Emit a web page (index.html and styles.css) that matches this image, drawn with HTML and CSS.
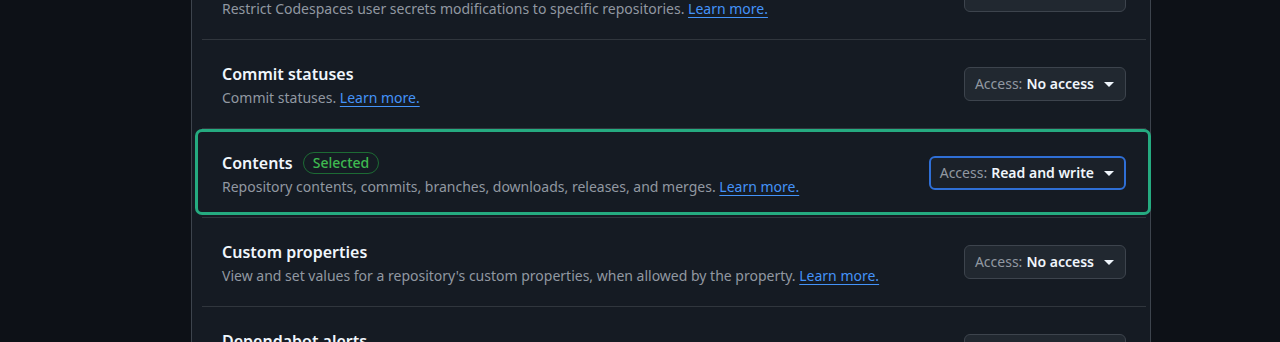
FILE: index.html
```html
<!DOCTYPE html>
<html lang="en">
<head>
<meta charset="utf-8">
<title>Permissions</title>
<link rel="stylesheet" href="styles.css">
</head>
<body>
<div class="page">
  <div class="panel">
    <ul class="perm-list">
      <li class="perm">
        <div class="perm-info">
          <div class="perm-title">Codespaces user secrets</div>
          <div class="perm-desc">Restrict Codespaces user secrets modifications to specific repositories. <a href="#">Learn more.</a></div>
        </div>
        <button class="access"><span class="lbl">Access:</span><span class="val">No access</span><span class="caret"></span></button>
      </li>
      <li class="perm">
        <div class="perm-info">
          <div class="perm-title">Commit statuses</div>
          <div class="perm-desc">Commit statuses. <a href="#">Learn more.</a></div>
        </div>
        <button class="access"><span class="lbl">Access:</span><span class="val">No access</span><span class="caret"></span></button>
      </li>
      <li class="perm selected">
        <div class="perm-info">
          <div class="perm-title">Contents <span class="badge">Selected</span></div>
          <div class="perm-desc">Repository contents, commits, branches, downloads, releases, and merges. <a href="#">Learn more.</a></div>
        </div>
        <button class="access focus"><span class="lbl">Access:</span><span class="val">Read and write</span><span class="caret"></span></button>
      </li>
      <li class="perm">
        <div class="perm-info">
          <div class="perm-title">Custom properties</div>
          <div class="perm-desc">View and set values for a repository's custom properties, when allowed by the property. <a href="#">Learn more.</a></div>
        </div>
        <button class="access"><span class="lbl">Access:</span><span class="val">No access</span><span class="caret"></span></button>
      </li>
      <li class="perm">
        <div class="perm-info">
          <div class="perm-title">Dependabot alerts</div>
          <div class="perm-desc">Retrieve Dependabot alerts. <a href="#">Learn more.</a></div>
        </div>
        <button class="access"><span class="lbl">Access:</span><span class="val">No access</span><span class="caret"></span></button>
      </li>
    </ul>
  </div>
</div>
</body>
</html>
```
FILE: styles.css
```css
html, body {
  margin: 0;
  padding: 0;
  background: #0d1117;
  height: 342px;
  overflow: hidden;
}
body {
  font-family: "Noto Sans", "Open Sans", sans-serif;
  color: #f0f6fc;
}
.page {
  display: flex;
  justify-content: flex-start;
  padding-left: 191px;
}
.panel {
  width: 958px;
  background: #151b23;
  border-left: 1px solid #3d444d;
  border-right: 1px solid #3d444d;
  min-height: 400px;
}
.perm-list {
  list-style: none;
  margin: -49px 4px 0 10px;
  padding: 0;
}
.perm {
  position: relative;
  display: flex;
  align-items: center;
  justify-content: space-between;
  height: 88px;
  padding: 0 20px;
  border-bottom: 1px solid #30363d;
  box-sizing: content-box;
}
.perm.selected::after {
  content: "";
  position: absolute;
  left: -7px;
  right: -5px;
  top: 0;
  bottom: 2px;
  border: 3px solid #25ab80;
  border-radius: 7px;
  pointer-events: none;
}
.perm-info {
  display: flex;
  flex-direction: column;
  gap: 2px;
  padding-top: 2px;
}
.perm-title {
  font-size: 16px;
  font-weight: 600;
  line-height: 24px;
  color: #f0f6fc;
  display: flex;
  align-items: center;
  gap: 10px;
}
.perm-desc {
  font-size: 14px;
  line-height: 20px;
  color: #9198a1;
}
.perm-desc a {
  color: #4493f8;
  text-decoration: underline;
  text-underline-offset: 3px;
}
.badge {
  display: inline-flex;
  align-items: center;
  height: 20px;
  padding: 0 9px;
  border: 1px solid #1d6b34;
  border-radius: 12px;
  color: #3fb950;
  font-size: 14px;
  font-weight: 500;
}
.access {
  display: inline-flex;
  align-items: center;
  height: 34px;
  padding: 0 11px 0 10px;
  background: #212830;
  border: 1px solid #3d444d;
  border-radius: 6px;
  font-family: inherit;
  font-size: 14px;
  line-height: 20px;
  color: #f0f6fc;
  white-space: nowrap;
}
.access.focus {
  border: 2px solid #2f6fd6;
  padding: 0 10px 0 9px;
  background: #1b2129;
}
.access .lbl {
  color: #9198a1;
  margin-right: 4px;
}
.access .val {
  font-weight: 600;
}
.caret {
  width: 0;
  height: 0;
  margin-left: 10px;
  border-left: 5px solid transparent;
  border-right: 5px solid transparent;
  border-top: 5px solid #f0f6fc;
}
```
